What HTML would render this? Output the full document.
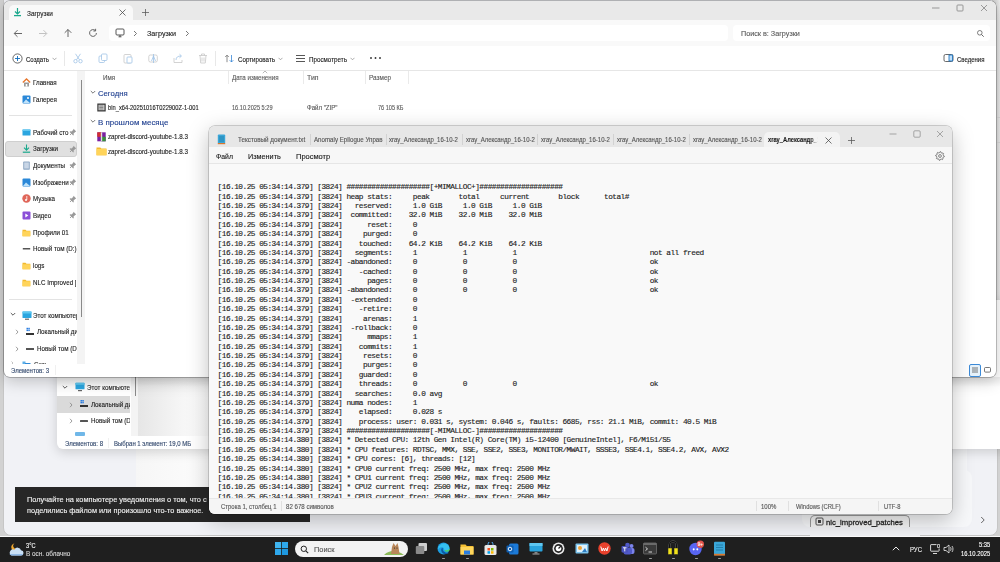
<!DOCTYPE html><html><head><meta charset="utf-8"><style>
html,body{margin:0;padding:0;width:1000px;height:562px;overflow:hidden;background:#ecedf0;}
body{position:relative;font-family:"Liberation Sans",sans-serif;}
.t{position:absolute;white-space:nowrap;-webkit-text-stroke:0.12px currentColor;}
.r{position:absolute;}
.mono{font-family:"Liberation Mono",monospace;}
</style></head><body>
<div class="r" style="left:0px;top:0px;width:1000px;height:537px;background:#d2d2d2"></div>
<div class="r" style="left:2.5px;top:-20px;width:995.5px;height:556px;background:#f1f2f6;border:1px solid #c6c6c6;border-radius:8px;box-sizing:border-box"></div>
<div class="r" style="left:940px;top:449px;width:27px;height:78px;background:#f6f7f9;border-radius:0 0 8px 0"></div>
<div class="r" style="left:136px;top:440px;width:90px;height:60px;background:linear-gradient(90deg,#f6f6f6,#fefefe)"></div>
<div class="r" style="left:992px;top:0px;width:8px;height:377px;background:linear-gradient(90deg,#c8c8c8,#dcdcdc 60%,#ececec);"></div>
<div class="r" style="left:993px;top:117px;width:7px;height:1px;background:#d8d8d8"></div>
<div class="r" style="left:993px;top:142px;width:7px;height:1px;background:#d8d8d8"></div>
<div class="r" style="left:57px;top:300px;width:960px;height:149px;background:#ffffff;border-radius:0 0 6px 6px;box-shadow:0 3px 12px rgba(0,0,0,.16)"></div>
<div class="r" style="left:57px;top:396px;width:73px;height:16.5px;background:#dadada"></div>
<div class="r" style="left:130.8px;top:377px;width:7.6px;height:59px;background:#f4f4f4"></div>
<div class="r" style="left:134.6px;top:377px;width:1.2px;height:19px;background:#8a8a8a"></div>
<div class="r" style="left:138.4px;top:377px;width:80px;height:59px;background:linear-gradient(90deg,#e6e6e6,#f6f6f6 55%,#fdfdfd)"></div>
<div class="r" style="left:57px;top:377px;width:960px;height:10px;background:linear-gradient(180deg,rgba(0,0,0,.07),rgba(0,0,0,0))"></div>
<svg class="r" style="left:62px;top:385px;" width="6" height="5" viewBox="0 0 6 5"><path d="M0.8 1L3 3.2 5.2 1" stroke="#333" stroke-width="0.8" fill="none"/></svg>
<svg class="r" style="left:75px;top:382px;" width="10" height="10" viewBox="0 0 10 10"><rect x="0.5" y="0.8" width="9" height="6.5" rx="0.6" fill="#2ba6e0"/><rect x="0.5" y="0.8" width="9" height="2" fill="#5fc8f0"/><rect x="3" y="8" width="4" height="1.2" fill="#666"/></svg>
<div class="r" style="left:86.5px;top:381.50px;width:43.5px;height:12px;overflow:hidden">
<div class="t " style="left:0px;top:2.81px;font-size:6.7px;line-height:8.38px;color:#1b1b1b;letter-spacing:0px;font-weight:normal;transform:scaleX(0.9300);transform-origin:0 50%;">Этот компьютер</div>
</div>
<svg class="r" style="left:69px;top:402px;" width="4" height="6" viewBox="0 0 4 6"><path d="M1 0.8L3 3 1 5.2" stroke="#777" stroke-width="0.7" fill="none"/></svg>
<svg class="r" style="left:79px;top:399px;" width="10" height="10" viewBox="0 0 10 10"><rect x="1" y="6" width="8" height="2" fill="#333"/><rect x="1.5" y="1" width="1.5" height="1.5" fill="#2a7de1"/><rect x="3.3" y="1" width="1.5" height="1.5" fill="#2a7de1"/><rect x="1.5" y="2.8" width="1.5" height="1.5" fill="#2a7de1"/><rect x="3.3" y="2.8" width="1.5" height="1.5" fill="#2a7de1"/></svg>
<div class="r" style="left:90.8px;top:398.50px;width:39.2px;height:12px;overflow:hidden">
<div class="t " style="left:0px;top:2.81px;font-size:6.7px;line-height:8.38px;color:#1b1b1b;letter-spacing:0px;font-weight:normal;transform:scaleX(0.9300);transform-origin:0 50%;">Локальный диск</div>
</div>
<svg class="r" style="left:69px;top:418px;" width="4" height="6" viewBox="0 0 4 6"><path d="M1 0.8L3 3 1 5.2" stroke="#777" stroke-width="0.7" fill="none"/></svg>
<div class="r" style="left:80px;top:420.3px;width:8px;height:1.6px;background:#555;border-radius:0.5px"></div>
<div class="r" style="left:90.8px;top:414.70px;width:39.2px;height:12px;overflow:hidden">
<div class="t " style="left:0px;top:2.81px;font-size:6.7px;line-height:8.38px;color:#1b1b1b;letter-spacing:0px;font-weight:normal;transform:scaleX(0.9300);transform-origin:0 50%;">Новый том (D:)</div>
</div>
<div class="r" style="left:75px;top:432px;width:10px;height:4px;background:#6fb7e8;border-radius:1px"></div>
<div class="t " style="left:65px;top:439.94px;font-size:6.5px;line-height:8.12px;color:#30466b;letter-spacing:0px;font-weight:normal;transform:scaleX(0.9329);transform-origin:0 50%;">Элементов: 8</div>
<div class="r" style="left:108px;top:438px;width:1px;height:10px;background:#f0f0f0"></div>
<div class="t " style="left:113.8px;top:439.94px;font-size:6.5px;line-height:8.12px;color:#30466b;letter-spacing:0px;font-weight:normal;transform:scaleX(0.9218);transform-origin:0 50%;">Выбран 1 элемент: 19,0 МБ</div>
<div class="r" style="left:4px;top:1px;width:992px;height:376px;background:#ffffff;border-radius:6px;box-shadow:0 0 0 0.7px rgba(0,0,0,.3),0 4px 16px rgba(0,0,0,.22)"></div>
<div class="r" style="left:4px;top:1px;width:992px;height:19px;background:#e9e9e9;border-radius:6px 6px 0 0"></div>
<div class="r" style="left:9px;top:5px;width:124px;height:16px;background:#f9f9f9;border-radius:5px 5px 0 0"></div>
<div class="r" style="left:4px;top:20px;width:992px;height:26px;background:#f9f9f9"></div>
<div class="r" style="left:4px;top:46px;width:992px;height:24px;background:#ffffff"></div>
<div class="r" style="left:4px;top:70px;width:992px;height:1px;background:#e6e6e6"></div>
<svg class="r" style="left:13px;top:7px;" width="9" height="10" viewBox="0 0 9 10"><path d="M4.5 1v6M2 4.5l2.5 2.5 2.5-2.5" stroke="#1aa88c" stroke-width="1.2" fill="none"/><path d="M1 8.6h7" stroke="#1aa88c" stroke-width="1.3"/></svg>
<div class="t " style="left:27px;top:9.81px;font-size:6.7px;line-height:8.38px;color:#1b1b1b;letter-spacing:0px;font-weight:normal;transform:scaleX(0.9643);transform-origin:0 50%;">Загрузки</div>
<svg class="r" style="left:118px;top:8px;" width="9" height="9" viewBox="0 0 9 9"><path d="M1.5 1.5l6 6M7.5 1.5l-6 6" stroke="#444" stroke-width="0.75"/></svg>
<svg class="r" style="left:141px;top:8px;" width="9" height="9" viewBox="0 0 9 9"><path d="M4.5 1v7M1 4.5h7" stroke="#555" stroke-width="0.75"/></svg>
<svg class="r" style="left:931px;top:3px;" width="10" height="10" viewBox="0 0 10 10"><path d="M1 5h7.5" stroke="#777" stroke-width="0.7"/></svg>
<svg class="r" style="left:955px;top:3px;" width="10" height="10" viewBox="0 0 10 10"><rect x="2" y="2" width="6" height="6" rx="0.8" stroke="#777" stroke-width="0.7" fill="none"/></svg>
<svg class="r" style="left:979px;top:3px;" width="10" height="10" viewBox="0 0 10 10"><path d="M2 2l6 6M8 2l-6 6" stroke="#777" stroke-width="0.7"/></svg>
<svg class="r" style="left:13px;top:29px;" width="10" height="9" viewBox="0 0 10 9"><path d="M9 4.5H1.5M4.5 1.2L1.2 4.5 4.5 7.8" stroke="#555" stroke-width="0.9" fill="none"/></svg>
<svg class="r" style="left:38px;top:29px;" width="10" height="9" viewBox="0 0 10 9"><path d="M1 4.5h7.5M5.5 1.2l3.3 3.3-3.3 3.3" stroke="#bbb" stroke-width="0.9" fill="none"/></svg>
<svg class="r" style="left:63px;top:28px;" width="10" height="10" viewBox="0 0 10 10"><path d="M5 9V1.5M1.7 4.8L5 1.5l3.3 3.3" stroke="#555" stroke-width="0.9" fill="none"/></svg>
<svg class="r" style="left:88px;top:28px;" width="10" height="10" viewBox="0 0 10 10"><path d="M8.4 5A3.4 3.4 0 1 1 7.2 2.4" stroke="#555" stroke-width="0.9" fill="none"/><path d="M7.6 0.8v2.2H5.4" stroke="#555" stroke-width="0.9" fill="none"/></svg>
<div class="r" style="left:109px;top:25px;width:619px;height:16px;background:#ffffff;border-radius:4px"></div>
<svg class="r" style="left:115px;top:28px;" width="10" height="10" viewBox="0 0 10 10"><rect x="1" y="1" width="8" height="6" rx="1" stroke="#444" stroke-width="0.9" fill="none"/><path d="M3.5 8.8h3M5 7v1.8" stroke="#444" stroke-width="0.9"/></svg>
<svg class="r" style="left:133px;top:30px;" width="5" height="7" viewBox="0 0 5 7"><path d="M1 1l2.5 2.5L1 6" stroke="#555" stroke-width="0.8" fill="none"/></svg>
<div class="t " style="left:147px;top:29.44px;font-size:7.3px;line-height:9.12px;color:#1b1b1b;letter-spacing:0px;font-weight:normal;transform:scaleX(0.9872);transform-origin:0 50%;">Загрузки</div>
<svg class="r" style="left:185px;top:30px;" width="5" height="7" viewBox="0 0 5 7"><path d="M1 1l2.5 2.5L1 6" stroke="#555" stroke-width="0.8" fill="none"/></svg>
<div class="r" style="left:733px;top:25px;width:257px;height:16px;background:#ffffff;border-radius:4px"></div>
<div class="t " style="left:741px;top:29.81px;font-size:6.7px;line-height:8.38px;color:#5a5a5a;letter-spacing:0px;font-weight:normal;transform:scaleX(1.0792);transform-origin:0 50%;">Поиск в: Загрузки</div>
<svg class="r" style="left:976px;top:29px;" width="9" height="9" viewBox="0 0 9 9"><circle cx="3.8" cy="3.8" r="2.3" stroke="#555" stroke-width="0.75" fill="none"/><path d="M5.5 5.5l2.2 2.2" stroke="#555" stroke-width="0.9"/></svg>
<svg class="r" style="left:12px;top:53px;" width="11" height="11" viewBox="0 0 11 11"><circle cx="5.5" cy="5.5" r="4.6" stroke="#444" stroke-width="0.8" fill="none"/><path d="M5.5 3v5M3 5.5h5" stroke="#0f6cbd" stroke-width="0.9"/></svg>
<div class="t " style="left:26px;top:56.11px;font-size:6.7px;line-height:8.38px;color:#1b1b1b;letter-spacing:0px;font-weight:normal;transform:scaleX(0.9034);transform-origin:0 50%;">Создать</div>
<svg class="r" style="left:52px;top:57px;" width="5" height="4" viewBox="0 0 5 4"><path d="M0.5 0.8L2.5 2.8 4.5 0.8" stroke="#888" stroke-width="0.7" fill="none"/></svg>
<div class="r" style="left:64px;top:51px;width:1px;height:15px;background:#e8e8e8"></div>
<svg class="r" style="left:73px;top:53px;" width="10" height="11" viewBox="0 0 10 11"><circle cx="2.5" cy="8.2" r="1.7" stroke="#9fc3e6" stroke-width="0.8" fill="none"/><circle cx="7.5" cy="8.2" r="1.7" stroke="#9fc3e6" stroke-width="0.8" fill="none"/><path d="M3.5 6.8L7.5 0.8M6.5 6.8L2.5 0.8" stroke="#9fc3e6" stroke-width="0.8"/></svg>
<svg class="r" style="left:98px;top:53px;" width="10" height="11" viewBox="0 0 10 11"><rect x="1" y="3" width="5.5" height="6.5" rx="1" stroke="#9fc3e6" stroke-width="0.8" fill="none"/><rect x="3.5" y="1" width="5.5" height="6.5" rx="1" stroke="#9fc3e6" stroke-width="0.8" fill="#fff"/></svg>
<svg class="r" style="left:123px;top:53px;" width="10" height="11" viewBox="0 0 10 11"><rect x="1" y="1.5" width="7" height="8.5" rx="1" stroke="#c8c8c8" stroke-width="0.8" fill="none"/><rect x="4" y="4" width="5" height="6" rx="0.8" stroke="#9fc3e6" stroke-width="0.8" fill="#fff"/></svg>
<svg class="r" style="left:148px;top:53px;" width="11" height="11" viewBox="0 0 11 11"><rect x="0.8" y="2" width="8.5" height="7" rx="1.5" stroke="#c8c8c8" stroke-width="0.8" fill="none"/><path d="M5.5 1v9M3.5 8l2-5 2 5" stroke="#9fc3e6" stroke-width="0.8" fill="none"/></svg>
<svg class="r" style="left:173px;top:53px;" width="11" height="11" viewBox="0 0 11 11"><path d="M1 5v4.5h8V7" stroke="#c8c8c8" stroke-width="0.8" fill="none"/><path d="M3 7c0-3 2-4 5-4M6.5 1.2L8.5 3 6.5 4.8" stroke="#9fc3e6" stroke-width="0.8" fill="none"/></svg>
<svg class="r" style="left:198px;top:53px;" width="10" height="11" viewBox="0 0 10 11"><path d="M1 2.5h8M3.5 2.5V1h3v1.5M2 2.5l0.7 7.5h4.6l0.7-7.5M4 4.5v4M6 4.5v4" stroke="#c8c8c8" stroke-width="0.8" fill="none"/></svg>
<div class="r" style="left:215px;top:51px;width:1px;height:15px;background:#e8e8e8"></div>
<svg class="r" style="left:224px;top:54px;" width="11" height="9" viewBox="0 0 11 9"><path d="M3 8.2V1.2M1.2 3L3 1.2 4.8 3" stroke="#666" stroke-width="0.75" fill="none"/><path d="M7.5 1v7M5.7 6.2L7.5 8 9.3 6.2" stroke="#2b7fd4" stroke-width="0.75" fill="none"/></svg>
<div class="t " style="left:238px;top:56.11px;font-size:6.7px;line-height:8.38px;color:#1b1b1b;letter-spacing:0px;font-weight:normal;transform:scaleX(0.9244);transform-origin:0 50%;">Сортировать</div>
<svg class="r" style="left:278px;top:57px;" width="5" height="4" viewBox="0 0 5 4"><path d="M0.5 0.8L2.5 2.8 4.5 0.8" stroke="#888" stroke-width="0.7" fill="none"/></svg>
<svg class="r" style="left:295px;top:54px;" width="11" height="9" viewBox="0 0 11 9"><path d="M1 1.5h9M1 4.5h9M1 7.5h9" stroke="#444" stroke-width="0.9"/></svg>
<div class="t " style="left:309px;top:56.11px;font-size:6.7px;line-height:8.38px;color:#1b1b1b;letter-spacing:0px;font-weight:normal;transform:scaleX(0.9346);transform-origin:0 50%;">Просмотреть</div>
<svg class="r" style="left:350px;top:57px;" width="5" height="4" viewBox="0 0 5 4"><path d="M0.5 0.8L2.5 2.8 4.5 0.8" stroke="#888" stroke-width="0.7" fill="none"/></svg>
<svg class="r" style="left:369px;top:56px;" width="13" height="4" viewBox="0 0 13 4"><circle cx="2" cy="2" r="0.95" fill="#333"/><circle cx="6.5" cy="2" r="0.95" fill="#333"/><circle cx="11" cy="2" r="0.95" fill="#333"/></svg>
<svg class="r" style="left:943px;top:53px;" width="11" height="10" viewBox="0 0 11 10"><rect x="1" y="1.5" width="9" height="7" rx="1.5" stroke="#444" stroke-width="0.8" fill="none"/><rect x="6" y="2" width="3.5" height="6" fill="#bfe0fb" stroke="#0f6cbd" stroke-width="0.8"/></svg>
<div class="t " style="left:957px;top:56.11px;font-size:6.7px;line-height:8.38px;color:#1b1b1b;letter-spacing:0px;font-weight:normal;transform:scaleX(0.8985);transform-origin:0 50%;">Сведения</div>
<div class="r" style="left:77px;top:71px;width:8px;height:293px;background:#f4f4f4"></div>
<div class="r" style="left:80.6px;top:80px;width:1.2px;height:237px;background:#8a8a8a"></div>
<div class="r" style="left:5px;top:140.5px;width:71.5px;height:16px;background:#e0e0e0;border:1px solid #cfcfcf;border-radius:3px;box-sizing:border-box"></div>
<div class="r" style="left:9px;top:115px;width:63px;height:1px;background:#e3e3e3"></div>
<div class="r" style="left:9px;top:299px;width:63px;height:1px;background:#e3e3e3"></div>
<div class="r" style="left:33px;top:76.00px;width:60px;height:12px;overflow:hidden">
<div class="t " style="left:0px;top:2.81px;font-size:6.7px;line-height:8.38px;color:#1b1b1b;letter-spacing:0px;font-weight:normal;transform:scaleX(0.9300);transform-origin:0 50%;">Главная</div>
</div>
<div class="r" style="left:33px;top:93.00px;width:60px;height:12px;overflow:hidden">
<div class="t " style="left:0px;top:2.81px;font-size:6.7px;line-height:8.38px;color:#1b1b1b;letter-spacing:0px;font-weight:normal;transform:scaleX(0.9300);transform-origin:0 50%;">Галерея</div>
</div>
<div class="r" style="left:33px;top:126.00px;width:60px;height:12px;overflow:hidden">
<div class="t " style="left:0px;top:2.81px;font-size:6.7px;line-height:8.38px;color:#1b1b1b;letter-spacing:0px;font-weight:normal;transform:scaleX(0.9300);transform-origin:0 50%;">Рабочий сто</div>
</div>
<div class="r" style="left:33px;top:142.50px;width:60px;height:12px;overflow:hidden">
<div class="t " style="left:0px;top:2.81px;font-size:6.7px;line-height:8.38px;color:#1b1b1b;letter-spacing:0px;font-weight:normal;transform:scaleX(0.9300);transform-origin:0 50%;">Загрузки</div>
</div>
<div class="r" style="left:33px;top:159.00px;width:60px;height:12px;overflow:hidden">
<div class="t " style="left:0px;top:2.81px;font-size:6.7px;line-height:8.38px;color:#1b1b1b;letter-spacing:0px;font-weight:normal;transform:scaleX(0.9300);transform-origin:0 50%;">Документы</div>
</div>
<div class="r" style="left:33px;top:176.00px;width:35.5px;height:12px;overflow:hidden">
<div class="t " style="left:0px;top:2.81px;font-size:6.7px;line-height:8.38px;color:#1b1b1b;letter-spacing:0px;font-weight:normal;transform:scaleX(0.9300);transform-origin:0 50%;">Изображени</div>
</div>
<div class="r" style="left:33px;top:192.50px;width:60px;height:12px;overflow:hidden">
<div class="t " style="left:0px;top:2.81px;font-size:6.7px;line-height:8.38px;color:#1b1b1b;letter-spacing:0px;font-weight:normal;transform:scaleX(0.9300);transform-origin:0 50%;">Музыка</div>
</div>
<div class="r" style="left:33px;top:209.00px;width:60px;height:12px;overflow:hidden">
<div class="t " style="left:0px;top:2.81px;font-size:6.7px;line-height:8.38px;color:#1b1b1b;letter-spacing:0px;font-weight:normal;transform:scaleX(0.9300);transform-origin:0 50%;">Видео</div>
</div>
<div class="r" style="left:33px;top:226.00px;width:60px;height:12px;overflow:hidden">
<div class="t " style="left:0px;top:2.81px;font-size:6.7px;line-height:8.38px;color:#1b1b1b;letter-spacing:0px;font-weight:normal;transform:scaleX(0.9300);transform-origin:0 50%;">Профили 01</div>
</div>
<div class="r" style="left:33px;top:242.50px;width:44px;height:12px;overflow:hidden">
<div class="t " style="left:0px;top:2.81px;font-size:6.7px;line-height:8.38px;color:#1b1b1b;letter-spacing:0px;font-weight:normal;transform:scaleX(0.9300);transform-origin:0 50%;">Новый том (D:)</div>
</div>
<div class="r" style="left:33px;top:259.50px;width:60px;height:12px;overflow:hidden">
<div class="t " style="left:0px;top:2.81px;font-size:6.7px;line-height:8.38px;color:#1b1b1b;letter-spacing:0px;font-weight:normal;transform:scaleX(0.9300);transform-origin:0 50%;">logs</div>
</div>
<div class="r" style="left:33px;top:276.00px;width:43px;height:12px;overflow:hidden">
<div class="t " style="left:0px;top:2.81px;font-size:6.7px;line-height:8.38px;color:#1b1b1b;letter-spacing:0px;font-weight:normal;transform:scaleX(0.9300);transform-origin:0 50%;">NLC Improved [</div>
</div>
<svg class="r" style="left:22px;top:77.5px;" width="9" height="9" viewBox="0 0 9 9"><path d="M0.8 4.5L4.5 1l3.7 3.5" stroke="#e8772e" stroke-width="1.3" fill="none"/><rect x="2" y="4.5" width="5" height="4" fill="#9a9a9a"/><rect x="3.7" y="6" width="1.6" height="2.5" fill="#fff"/></svg>
<svg class="r" style="left:22px;top:94.5px;" width="9" height="9" viewBox="0 0 9 9"><rect x="0.5" y="0.5" width="8" height="8" rx="1" fill="#2b88d8"/><circle cx="6" cy="3" r="1" fill="#fff"/><path d="M1 8l3-3.5 4 3.5z" fill="#bfe3fb"/></svg>
<svg class="r" style="left:22px;top:127.5px;" width="9" height="9" viewBox="0 0 9 9"><rect x="0.5" y="1.5" width="8" height="6" rx="0.6" fill="#2ba6e0"/><rect x="0.5" y="1.5" width="8" height="1.5" fill="#66c9f2"/></svg>
<svg class="r" style="left:22px;top:144.0px;" width="9" height="9" viewBox="0 0 9 9"><path d="M4.5 0.5v5.5M2 3.6l2.5 2.5 2.5-2.5" stroke="#1aa88c" stroke-width="1.1" fill="none"/><path d="M0.8 8.2h7.4" stroke="#1aa88c" stroke-width="1.2"/></svg>
<svg class="r" style="left:22px;top:160.5px;" width="9" height="9" viewBox="0 0 9 9"><rect x="1.2" y="0.5" width="6.6" height="8.2" rx="0.8" fill="#8fa8c4"/><rect x="2.2" y="1.5" width="4.6" height="6" fill="#c9d6e6"/></svg>
<svg class="r" style="left:22px;top:177.5px;" width="9" height="9" viewBox="0 0 9 9"><rect x="0.5" y="0.5" width="8" height="8" rx="1" fill="#2b88d8"/><path d="M1 8l3-3.5 4 3.5z" fill="#bfe3fb"/></svg>
<svg class="r" style="left:22px;top:194.0px;" width="9" height="9" viewBox="0 0 9 9"><circle cx="4.5" cy="4.5" r="4.2" fill="#e0675a"/><path d="M4.8 2v4" stroke="#fff" stroke-width="0.8"/><circle cx="4" cy="6" r="1" fill="#fff"/></svg>
<svg class="r" style="left:22px;top:210.5px;" width="9" height="9" viewBox="0 0 9 9"><rect x="0.5" y="0.5" width="8" height="8" rx="1" fill="#8b4fd8"/><path d="M3.3 2.5v4l3-2z" fill="#fff"/></svg>
<svg class="r" style="left:22px;top:227.5px;" width="9" height="9" viewBox="0 0 9 9"><path d="M0.5 1.8h3l1 1h3.8v5.5H0.5z" fill="#f2b92e"/><rect x="0.5" y="3.3" width="7.8" height="5" rx="0.4" fill="#ffd45a"/></svg>
<svg class="r" style="left:22px;top:244.0px;" width="9" height="9" viewBox="0 0 9 9"><rect x="0.8" y="4" width="7.4" height="1.5" fill="#555"/></svg>
<svg class="r" style="left:22px;top:261.0px;" width="9" height="9" viewBox="0 0 9 9"><path d="M0.5 1.8h3l1 1h3.8v5.5H0.5z" fill="#f2b92e"/><rect x="0.5" y="3.3" width="7.8" height="5" rx="0.4" fill="#ffd45a"/></svg>
<svg class="r" style="left:22px;top:277.5px;" width="9" height="9" viewBox="0 0 9 9"><path d="M0.5 1.8h3l1 1h3.8v5.5H0.5z" fill="#f2b92e"/><rect x="0.5" y="3.3" width="7.8" height="5" rx="0.4" fill="#ffd45a"/></svg>
<svg class="r" style="left:22px;top:311px;" width="10" height="9" viewBox="0 0 10 9"><rect x="0.5" y="0.5" width="9" height="6.5" rx="0.6" fill="#2ba6e0"/><rect x="0.5" y="0.5" width="9" height="2" fill="#5fc8f0"/><rect x="3" y="7.6" width="4" height="1.2" fill="#666"/></svg>
<svg class="r" style="left:25px;top:327px;" width="10" height="9" viewBox="0 0 10 9"><rect x="1" y="6" width="8" height="2" fill="#333"/><rect x="1.5" y="0.8" width="1.5" height="1.5" fill="#2a7de1"/><rect x="3.3" y="0.8" width="1.5" height="1.5" fill="#2a7de1"/><rect x="1.5" y="2.6" width="1.5" height="1.5" fill="#2a7de1"/><rect x="3.3" y="2.6" width="1.5" height="1.5" fill="#2a7de1"/></svg>
<div class="r" style="left:26px;top:348.3px;width:8px;height:1.6px;background:#555"></div>
<svg class="r" style="left:97px;top:103px;" width="9" height="9" viewBox="0 0 9 9"><rect x="0.3" y="0.5" width="8.4" height="8" fill="#3a3a3a"/><rect x="1.5" y="1.8" width="6" height="5.4" fill="#cfcfcf"/><path d="M2.3 3h4M2.3 4.5h4M2.3 6h4" stroke="#555" stroke-width="0.6"/></svg>
<svg class="r" style="left:97px;top:132px;" width="9" height="10" viewBox="0 0 9 10"><rect x="0.3" y="0.3" width="8.4" height="9" fill="#7a1fa2"/><rect x="0.3" y="0.3" width="4.2" height="4.5" fill="#d32f2f"/><rect x="4.5" y="4.8" width="4.2" height="4.5" fill="#388e3c"/><rect x="3.8" y="0.3" width="1.4" height="9" fill="#ddd"/></svg>
<svg class="r" style="left:96px;top:146px;" width="11" height="10" viewBox="0 0 11 10"><path d="M0.5 1.5h3.8l1 1h5.2v6.8H0.5z" fill="#f2b92e"/><rect x="0.5" y="3" width="10" height="6.3" fill="#ffd45a"/></svg>
<svg class="r" style="left:68.5px;top:128px;" width="8" height="8" viewBox="0 0 8 8"><path d="M1 7l2.3-2.3" stroke="#8a8a8a" stroke-width="0.8"/><path d="M4.6 0.8l2.6 2.6-1 .6-1.6 1.6.2 1.3-.6.6-3.6-3.6.6-.6 1.3.2 1.6-1.6z" fill="#9a9a9a"/></svg>
<svg class="r" style="left:68.5px;top:144.5px;" width="8" height="8" viewBox="0 0 8 8"><path d="M1 7l2.3-2.3" stroke="#8a8a8a" stroke-width="0.8"/><path d="M4.6 0.8l2.6 2.6-1 .6-1.6 1.6.2 1.3-.6.6-3.6-3.6.6-.6 1.3.2 1.6-1.6z" fill="#9a9a9a"/></svg>
<svg class="r" style="left:68.5px;top:161px;" width="8" height="8" viewBox="0 0 8 8"><path d="M1 7l2.3-2.3" stroke="#8a8a8a" stroke-width="0.8"/><path d="M4.6 0.8l2.6 2.6-1 .6-1.6 1.6.2 1.3-.6.6-3.6-3.6.6-.6 1.3.2 1.6-1.6z" fill="#9a9a9a"/></svg>
<svg class="r" style="left:68.5px;top:178px;" width="8" height="8" viewBox="0 0 8 8"><path d="M1 7l2.3-2.3" stroke="#8a8a8a" stroke-width="0.8"/><path d="M4.6 0.8l2.6 2.6-1 .6-1.6 1.6.2 1.3-.6.6-3.6-3.6.6-.6 1.3.2 1.6-1.6z" fill="#9a9a9a"/></svg>
<svg class="r" style="left:68.5px;top:194.5px;" width="8" height="8" viewBox="0 0 8 8"><path d="M1 7l2.3-2.3" stroke="#8a8a8a" stroke-width="0.8"/><path d="M4.6 0.8l2.6 2.6-1 .6-1.6 1.6.2 1.3-.6.6-3.6-3.6.6-.6 1.3.2 1.6-1.6z" fill="#9a9a9a"/></svg>
<svg class="r" style="left:68.5px;top:211px;" width="8" height="8" viewBox="0 0 8 8"><path d="M1 7l2.3-2.3" stroke="#8a8a8a" stroke-width="0.8"/><path d="M4.6 0.8l2.6 2.6-1 .6-1.6 1.6.2 1.3-.6.6-3.6-3.6.6-.6 1.3.2 1.6-1.6z" fill="#9a9a9a"/></svg>
<div class="r" style="left:33px;top:309.00px;width:43.5px;height:12px;overflow:hidden">
<div class="t " style="left:0px;top:2.81px;font-size:6.7px;line-height:8.38px;color:#1b1b1b;letter-spacing:0px;font-weight:normal;transform:scaleX(0.9300);transform-origin:0 50%;">Этот компьютер</div>
</div>
<div class="r" style="left:37px;top:325.50px;width:39.5px;height:12px;overflow:hidden">
<div class="t " style="left:0px;top:2.81px;font-size:6.7px;line-height:8.38px;color:#1b1b1b;letter-spacing:0px;font-weight:normal;transform:scaleX(0.9300);transform-origin:0 50%;">Локальный диск</div>
</div>
<div class="r" style="left:37px;top:342.50px;width:39.5px;height:12px;overflow:hidden">
<div class="t " style="left:0px;top:2.81px;font-size:6.7px;line-height:8.38px;color:#1b1b1b;letter-spacing:0px;font-weight:normal;transform:scaleX(0.9300);transform-origin:0 50%;">Новый том (D:)</div>
</div>
<svg class="r" style="left:10px;top:312px;" width="6" height="5" viewBox="0 0 6 5"><path d="M0.8 1L3 3.2 5.2 1" stroke="#333" stroke-width="0.8" fill="none"/></svg>
<svg class="r" style="left:15px;top:329px;" width="4" height="6" viewBox="0 0 4 6"><path d="M1 0.8L3 3 1 5.2" stroke="#777" stroke-width="0.7" fill="none"/></svg>
<svg class="r" style="left:15px;top:346px;" width="4" height="6" viewBox="0 0 4 6"><path d="M1 0.8L3 3 1 5.2" stroke="#777" stroke-width="0.7" fill="none"/></svg>
<div class="r" style="left:5px;top:358px;width:72px;height:6px;overflow:hidden">
<svg class="r" style="left:6px;top:2.5px;" width="4" height="4" viewBox="0 0 4 4"><path d="M0.5 0.5L2 2 0.5 3.5" stroke="#999" stroke-width="0.6" fill="none"/></svg>
<svg class="r" style="left:17px;top:1.5px;" width="9" height="6" viewBox="0 0 9 6"><rect x="0.5" y="1.5" width="3" height="3" fill="#5aaee8"/><rect x="3" y="3" width="5.5" height="2.5" fill="#2f8ad8"/></svg>
<div class="t " style="left:29px;top:2.81px;font-size:6.7px;line-height:8.38px;color:#333;letter-spacing:0px;font-weight:normal;transform:scaleX(0.9395);transform-origin:0 50%;">Сеть</div>
</div>
<div class="t " style="left:103px;top:73.94px;font-size:6.5px;line-height:8.12px;color:#5a5a5a;letter-spacing:0px;font-weight:normal;transform:scaleX(0.9636);transform-origin:0 50%;">Имя</div>
<svg class="r" style="left:262px;top:70px;" width="6" height="4" viewBox="0 0 6 4"><path d="M0.8 3.2L3 1l2.2 2.2" stroke="#888" stroke-width="0.6" fill="none"/></svg>
<div class="t " style="left:232px;top:73.94px;font-size:6.5px;line-height:8.12px;color:#5a5a5a;letter-spacing:0px;font-weight:normal;transform:scaleX(0.9522);transform-origin:0 50%;">Дата изменения</div>
<div class="t " style="left:307px;top:73.94px;font-size:6.5px;line-height:8.12px;color:#5a5a5a;letter-spacing:0px;font-weight:normal;transform:scaleX(1.0613);transform-origin:0 50%;">Тип</div>
<div class="t " style="left:369px;top:73.94px;font-size:6.5px;line-height:8.12px;color:#5a5a5a;letter-spacing:0px;font-weight:normal;transform:scaleX(0.9848);transform-origin:0 50%;">Размер</div>
<div class="r" style="left:228px;top:71px;width:1px;height:13px;background:#eaeaea"></div>
<div class="r" style="left:303px;top:71px;width:1px;height:13px;background:#eaeaea"></div>
<div class="r" style="left:365px;top:71px;width:1px;height:13px;background:#eaeaea"></div>
<div class="r" style="left:408px;top:71px;width:1px;height:13px;background:#eaeaea"></div>
<svg class="r" style="left:90px;top:90px;" width="6" height="5" viewBox="0 0 6 5"><path d="M0.8 1L3 3.2 5.2 1" stroke="#555" stroke-width="0.8" fill="none"/></svg>
<div class="t " style="left:98px;top:89.25px;font-size:7.6px;line-height:9.5px;color:#1e3e8f;letter-spacing:0px;font-weight:normal;transform:scaleX(1.0163);transform-origin:0 50%;">Сегодня</div>
<svg class="r" style="left:90px;top:119px;" width="6" height="5" viewBox="0 0 6 5"><path d="M0.8 1L3 3.2 5.2 1" stroke="#555" stroke-width="0.8" fill="none"/></svg>
<div class="t " style="left:98px;top:118.25px;font-size:7.6px;line-height:9.5px;color:#1e3e8f;letter-spacing:0px;font-weight:normal;transform:scaleX(1.0400);transform-origin:0 50%;">В прошлом месяце</div>
<div class="t " style="left:108px;top:104.31px;font-size:6.7px;line-height:8.38px;color:#1b1b1b;letter-spacing:0px;font-weight:normal;transform:scaleX(0.8614);transform-origin:0 50%;">bin_x64-20251016T022900Z-1-001</div>
<div class="t " style="left:232px;top:104.44px;font-size:6.5px;line-height:8.12px;color:#5a5a5a;letter-spacing:0px;font-weight:normal;transform:scaleX(0.8620);transform-origin:0 50%;">16.10.2025 5:29</div>
<div class="t " style="left:307px;top:104.44px;font-size:6.5px;line-height:8.12px;color:#5a5a5a;letter-spacing:0px;font-weight:normal;transform:scaleX(0.9381);transform-origin:0 50%;">Файл &quot;ZIP&quot;</div>
<div class="t " style="left:378px;top:104.44px;font-size:6.5px;line-height:8.12px;color:#5a5a5a;letter-spacing:0px;font-weight:normal;transform:scaleX(0.8575);transform-origin:0 50%;">76 105 КБ</div>
<div class="t " style="left:108px;top:133.31px;font-size:6.7px;line-height:8.38px;color:#1b1b1b;letter-spacing:0px;font-weight:normal;transform:scaleX(0.9340);transform-origin:0 50%;">zapret-discord-youtube-1.8.3</div>
<div class="t " style="left:108px;top:147.81px;font-size:6.7px;line-height:8.38px;color:#1b1b1b;letter-spacing:0px;font-weight:normal;transform:scaleX(0.9340);transform-origin:0 50%;">zapret-discord-youtube-1.8.3</div>
<div class="t " style="left:11px;top:366.94px;font-size:6.5px;line-height:8.12px;color:#30466b;letter-spacing:0px;font-weight:normal;transform:scaleX(0.9329);transform-origin:0 50%;">Элементов: 3</div>
<div class="r" style="left:55px;top:365px;width:1px;height:10px;background:#f0f0f0"></div>
<div class="r" style="left:969px;top:364px;width:12px;height:12.5px;background:#e6f2fb;border:1px solid #3b8ad8;border-radius:2px;box-sizing:border-box"></div>
<svg class="r" style="left:971px;top:366px;" width="8" height="8" viewBox="0 0 8 8"><path d="M1 2h6M1 4h6M1 6h6" stroke="#666" stroke-width="0.9"/></svg>
<svg class="r" style="left:984px;top:367px;" width="7" height="6" viewBox="0 0 7 6"><rect x="0.5" y="0.5" width="6" height="4.6" rx="1" stroke="#555" stroke-width="0.8" fill="none"/></svg>
<div class="r" style="left:802px;top:470px;width:170px;height:57px;background:#f7f8fa;border-radius:8px"></div>
<div class="r" style="left:810px;top:515px;width:100px;height:14px;background:#f5f5f5;border:1px solid #9a9a9a;border-bottom:none;border-radius:5px 5px 0 0;box-sizing:border-box"></div>
<div class="t " style="left:826px;top:518.25px;font-size:7.6px;line-height:9.5px;color:#2a2a2a;letter-spacing:0px;font-weight:normal;transform:scaleX(1.0126);transform-origin:0 50%;-webkit-text-stroke:0.3px #2a2a2a">nlc_improved_patches</div>
<svg class="r" style="left:815px;top:517px;" width="9" height="9" viewBox="0 0 9 9"><rect x="1" y="1" width="7" height="7" rx="1" stroke="#444" stroke-width="0.9" fill="none"/><rect x="3" y="3" width="3" height="3" fill="#444"/></svg>
<div class="r" style="left:810px;top:527px;width:110px;height:10px;background:#f1f2f5"></div>
<svg class="r" style="left:980px;top:516px;" width="6" height="8" viewBox="0 0 6 8"><path d="M1.2 1l3 3-3 3" stroke="#555" stroke-width="0.9" fill="none"/></svg>
<div class="r" style="left:14.7px;top:487px;width:295.6px;height:35px;background:#272727"></div>
<div class="t " style="left:27px;top:495.30px;font-size:7.2px;line-height:9.0px;color:#f0f0f0;letter-spacing:0px;font-weight:normal;transform:scaleX(1.0269);transform-origin:0 50%;">Получайте на компьютере уведомления о том, что с в</div>
<div class="t " style="left:27px;top:505.60px;font-size:7.2px;line-height:9.0px;color:#f0f0f0;letter-spacing:0px;font-weight:normal;transform:scaleX(1.0197);transform-origin:0 50%;">поделились файлом или произошло что-то важное.</div>
<div class="r" style="left:208.5px;top:126px;width:743.5px;height:388px;background:#f9f9f9;border-radius:6px;box-shadow:0 6px 22px rgba(0,0,0,.26), 0 0 0 0.7px rgba(0,0,0,.22);overflow:hidden"></div>
<div class="r" style="left:208.5px;top:126px;width:743.5px;height:21px;background:#e7e7e7;border-radius:6px 6px 0 0"></div>
<div class="r" style="left:208.5px;top:147px;width:743.5px;height:17px;background:#f7f7f7;border-bottom:1px solid #e6e6e6;box-sizing:border-box"></div>
<div class="r" style="left:208.5px;top:498px;width:743.5px;height:16px;background:#f5f5f5;border-radius:0 0 6px 6px;border-top:1px solid #e8e8e8;box-sizing:border-box"></div>
<svg class="r" style="left:217px;top:134px;" width="9" height="11" viewBox="0 0 9 11"><rect x="0.8" y="0.5" width="7.4" height="9" rx="1" fill="#3aa6d8"/><path d="M2 3h5M2 5h5M2 7h5" stroke="#1a6f99" stroke-width="0.6"/><rect x="0.8" y="9" width="7.4" height="1.2" fill="#d9782e"/></svg>
<div class="t " style="left:238px;top:136.38px;font-size:6.6px;line-height:8.25px;color:#555;letter-spacing:0px;font-weight:normal;transform:scaleX(0.9514);transform-origin:0 50%;">Текстовый документ.txt</div>
<div class="t " style="left:314px;top:136.38px;font-size:6.6px;line-height:8.25px;color:#555;letter-spacing:0px;font-weight:normal;transform:scaleX(0.9353);transform-origin:0 50%;">Anomaly Epilogue Управ</div>
<div class="t " style="left:389.4px;top:136.38px;font-size:6.6px;line-height:8.25px;color:#555;letter-spacing:0px;font-weight:normal;transform:scaleX(0.9117);transform-origin:0 50%;">xray_Александр_16-10-2</div>
<div class="t " style="left:465.8px;top:136.38px;font-size:6.6px;line-height:8.25px;color:#555;letter-spacing:0px;font-weight:normal;transform:scaleX(0.9117);transform-origin:0 50%;">xray_Александр_16-10-2</div>
<div class="t " style="left:541.4px;top:136.38px;font-size:6.6px;line-height:8.25px;color:#555;letter-spacing:0px;font-weight:normal;transform:scaleX(0.9117);transform-origin:0 50%;">xray_Александр_16-10-2</div>
<div class="t " style="left:617px;top:136.38px;font-size:6.6px;line-height:8.25px;color:#555;letter-spacing:0px;font-weight:normal;transform:scaleX(0.9117);transform-origin:0 50%;">xray_Александр_16-10-2</div>
<div class="t " style="left:692.7px;top:136.38px;font-size:6.6px;line-height:8.25px;color:#555;letter-spacing:0px;font-weight:normal;transform:scaleX(0.9117);transform-origin:0 50%;">xray_Александр_16-10-2</div>
<div class="r" style="left:310.2px;top:134px;width:1px;height:11px;background:#d2d2d2"></div>
<div class="r" style="left:385.8px;top:134px;width:1px;height:11px;background:#d2d2d2"></div>
<div class="r" style="left:461.5px;top:134px;width:1px;height:11px;background:#d2d2d2"></div>
<div class="r" style="left:537px;top:134px;width:1px;height:11px;background:#d2d2d2"></div>
<div class="r" style="left:612.5px;top:134px;width:1px;height:11px;background:#d2d2d2"></div>
<div class="r" style="left:689px;top:134px;width:1px;height:11px;background:#d2d2d2"></div>
<div class="r" style="left:764px;top:132px;width:75.5px;height:15px;background:#f3f3f3;border-radius:5px 5px 0 0"></div>
<div class="r" style="left:768px;top:132px;width:50px;height:15px;overflow:hidden;-webkit-mask-image:linear-gradient(90deg,#000 85%,transparent)">
<div class="t " style="left:0.3px;top:4.38px;font-size:6.6px;line-height:8.25px;color:#1b1b1b;letter-spacing:0px;font-weight:bold;transform:scaleX(0.8703);transform-origin:0 50%;">xray_Александр_16-10-2</div>
</div>
<svg class="r" style="left:824px;top:135.5px;" width="9" height="9" viewBox="0 0 9 9"><path d="M1.5 1.5l6 6M7.5 1.5l-6 6" stroke="#444" stroke-width="0.75"/></svg>
<svg class="r" style="left:847px;top:135.5px;" width="9" height="9" viewBox="0 0 9 9"><path d="M4.5 1v7M1 4.5h7" stroke="#555" stroke-width="0.75"/></svg>
<svg class="r" style="left:888px;top:129px;" width="10" height="10" viewBox="0 0 10 10"><path d="M1.5 5h7" stroke="#888" stroke-width="0.7"/></svg>
<svg class="r" style="left:912px;top:129px;" width="10" height="10" viewBox="0 0 10 10"><rect x="1.8" y="1.8" width="6.4" height="6.4" rx="1" stroke="#888" stroke-width="0.7" fill="none"/></svg>
<svg class="r" style="left:935px;top:129px;" width="10" height="10" viewBox="0 0 10 10"><path d="M2 2l6 6M8 2l-6 6" stroke="#888" stroke-width="0.7"/></svg>
<div class="t " style="left:216px;top:152.44px;font-size:7.3px;line-height:9.12px;color:#1b1b1b;letter-spacing:0px;font-weight:normal;transform:scaleX(0.9473);transform-origin:0 50%;">Файл</div>
<div class="t " style="left:248px;top:152.44px;font-size:7.3px;line-height:9.12px;color:#1b1b1b;letter-spacing:0px;font-weight:normal;transform:scaleX(0.9962);transform-origin:0 50%;">Изменить</div>
<div class="t " style="left:296px;top:152.44px;font-size:7.3px;line-height:9.12px;color:#1b1b1b;letter-spacing:0px;font-weight:normal;transform:scaleX(1.0259);transform-origin:0 50%;">Просмотр</div>
<svg class="r" style="left:935px;top:151px;" width="10" height="10" viewBox="0 0 10 10"><path d="M9.30 5.00 L9.22 5.84 L8.05 6.26 L7.74 6.83 L8.04 8.04 L7.39 8.58 L6.26 8.05 L5.64 8.24 L5.00 9.30 L4.16 9.22 L3.74 8.05 L3.17 7.74 L1.96 8.04 L1.42 7.39 L1.95 6.26 L1.76 5.64 L0.70 5.00 L0.78 4.16 L1.95 3.74 L2.26 3.17 L1.96 1.96 L2.61 1.42 L3.74 1.95 L4.36 1.76 L5.00 0.70 L5.84 0.78 L6.26 1.95 L6.83 2.26 L8.04 1.96 L8.58 2.61 L8.05 3.74 L8.24 4.36Z" stroke="#555" stroke-width="0.7" fill="none" stroke-linejoin="round"/><circle cx="5" cy="5" r="1.4" stroke="#555" stroke-width="0.7" fill="none"/></svg>
<div class="t " style="left:220.7px;top:503.38px;font-size:6.6px;line-height:8.25px;color:#555;letter-spacing:0px;font-weight:normal;transform:scaleX(0.9056);transform-origin:0 50%;">Строка 1, столбец 1</div>
<div class="r" style="left:281px;top:501px;width:1px;height:10px;background:#e0e0e0"></div>
<div class="t " style="left:286px;top:503.38px;font-size:6.6px;line-height:8.25px;color:#555;letter-spacing:0px;font-weight:normal;transform:scaleX(0.9263);transform-origin:0 50%;">82 678 символов</div>
<div class="r" style="left:755.5px;top:501px;width:1px;height:10px;background:#e0e0e0"></div>
<div class="r" style="left:788px;top:501px;width:1px;height:10px;background:#e0e0e0"></div>
<div class="r" style="left:878px;top:501px;width:1px;height:10px;background:#e0e0e0"></div>
<div class="t " style="left:761px;top:503.38px;font-size:6.6px;line-height:8.25px;color:#555;letter-spacing:0px;font-weight:normal;transform:scaleX(0.9123);transform-origin:0 50%;">100%</div>
<div class="t " style="left:796px;top:503.38px;font-size:6.6px;line-height:8.25px;color:#555;letter-spacing:0px;font-weight:normal;transform:scaleX(0.8918);transform-origin:0 50%;">Windows (CRLF)</div>
<div class="t " style="left:884px;top:503.38px;font-size:6.6px;line-height:8.25px;color:#555;letter-spacing:0px;font-weight:normal;transform:scaleX(0.8772);transform-origin:0 50%;">UTF-8</div>
<div class="r" style="left:209px;top:164px;width:742px;height:334px;overflow:hidden">
<pre class="mono" style="position:absolute;left:8.6px;top:19.30px;margin:0;font-size:7.8px;line-height:9.37px;letter-spacing:-0.5242px;color:#202020;-webkit-text-stroke:0.12px #202020">[16.10.25 05:34:14.379] [3824] ####################[+MIMALLOC+]####################
[16.10.25 05:34:14.379] [3824] heap stats:     peak       total     current       block      total#
[16.10.25 05:34:14.379] [3824]   reserved:     1.0 GiB     1.0 GiB     1.0 GiB
[16.10.25 05:34:14.379] [3824]  committed:    32.0 MiB    32.0 MiB    32.0 MiB
[16.10.25 05:34:14.379] [3824]      reset:     0
[16.10.25 05:34:14.379] [3824]     purged:     0
[16.10.25 05:34:14.379] [3824]    touched:    64.2 KiB    64.2 KiB    64.2 KiB
[16.10.25 05:34:14.379] [3824]   segments:     1           1           1                                not all freed
[16.10.25 05:34:14.379] [3824] -abandoned:     0           0           0                                ok
[16.10.25 05:34:14.379] [3824]    -cached:     0           0           0                                ok
[16.10.25 05:34:14.379] [3824]      pages:     0           0           0                                ok
[16.10.25 05:34:14.379] [3824] -abandoned:     0           0           0                                ok
[16.10.25 05:34:14.379] [3824]  -extended:     0
[16.10.25 05:34:14.379] [3824]    -retire:     0
[16.10.25 05:34:14.379] [3824]     arenas:     1
[16.10.25 05:34:14.379] [3824]  -rollback:     0
[16.10.25 05:34:14.379] [3824]      mmaps:     1
[16.10.25 05:34:14.379] [3824]    commits:     1
[16.10.25 05:34:14.379] [3824]     resets:     0
[16.10.25 05:34:14.379] [3824]     purges:     0
[16.10.25 05:34:14.379] [3824]    guarded:     0
[16.10.25 05:34:14.379] [3824]    threads:     0           0           0                                ok
[16.10.25 05:34:14.379] [3824]   searches:     0.0 avg
[16.10.25 05:34:14.379] [3824] numa nodes:     1
[16.10.25 05:34:14.379] [3824]    elapsed:     0.028 s
[16.10.25 05:34:14.379] [3824]    process: user: 0.031 s, system: 0.046 s, faults: 6685, rss: 21.1 MiB, commit: 40.5 MiB
[16.10.25 05:34:14.379] [3824] ####################[-MIMALLOC-]####################
[16.10.25 05:34:14.380] [3824] * Detected CPU: 12th Gen Intel(R) Core(TM) i5-12400 [GenuineIntel], F6/M151/S5
[16.10.25 05:34:14.380] [3824] * CPU features: RDTSC, MMX, SSE, SSE2, SSE3, MONITOR/MWAIT, SSSE3, SSE4.1, SSE4.2, AVX, AVX2
[16.10.25 05:34:14.380] [3824] * CPU cores: [6], threads: [12]
[16.10.25 05:34:14.380] [3824] * CPU0 current freq: 2500 MHz, max freq: 2500 MHz
[16.10.25 05:34:14.380] [3824] * CPU1 current freq: 2500 MHz, max freq: 2500 MHz
[16.10.25 05:34:14.380] [3824] * CPU2 current freq: 2500 MHz, max freq: 2500 MHz
[16.10.25 05:34:14.380] [3824] * CPU3 current freq: 2500 MHz, max freq: 2500 MHz</pre>
</div>
<div class="r" style="left:0px;top:536px;width:1000px;height:1px;background:#fafafa"></div>
<div class="r" style="left:0px;top:537px;width:1000px;height:25px;background:#1f1f1f"></div>
<svg class="r" style="left:9px;top:542px;" width="15" height="15" viewBox="0 0 15 15"><path d="M5.5 1.2a4 4 0 1 0 4.6 5.2 3.3 3.3 0 0 1-4.6-5.2z" fill="#f0a830"/><path d="M2.6 13.5h9.2a2.6 2.6 0 0 0 .2-5.2 3.5 3.5 0 0 0-6.6-.6A2.9 2.9 0 0 0 2.6 13.5z" fill="#c9dff5"/><path d="M2.6 13.5h9.2a2.6 2.6 0 0 0 2.3-1.6H.5a2.9 2.9 0 0 0 2.1 1.6z" fill="#8fb8e6"/></svg>
<div class="t " style="left:26px;top:542.25px;font-size:6.8px;line-height:8.5px;color:#ffffff;letter-spacing:0px;font-weight:normal;transform:scaleX(0.8325);transform-origin:0 50%;">3°C</div>
<div class="t " style="left:26px;top:550.25px;font-size:6.8px;line-height:8.5px;color:#d8d8d8;letter-spacing:0px;font-weight:normal;transform:scaleX(0.9377);transform-origin:0 50%;">В осн. облачно</div>
<svg class="r" style="left:275px;top:542px;" width="13" height="13" viewBox="0 0 13 13"><rect x="0" y="0" width="6.1" height="6.1" fill="#3fb5f0"/><rect x="6.9" y="0" width="6.1" height="6.1" fill="#2ea8ec"/><rect x="0" y="6.9" width="6.1" height="6.1" fill="#2ea8ec"/><rect x="6.9" y="6.9" width="6.1" height="6.1" fill="#1e98e0"/></svg>
<div class="r" style="left:295px;top:541.3px;width:113px;height:16.2px;background:#f3f3f3;border-radius:8.1px"></div>
<svg class="r" style="left:300px;top:545px;" width="9" height="9" viewBox="0 0 9 9"><circle cx="3.8" cy="3.8" r="2.7" stroke="#222" stroke-width="1" fill="none"/><path d="M5.8 5.8l2.4 2.4" stroke="#222" stroke-width="1.1"/></svg>
<div class="t " style="left:313.5px;top:545.00px;font-size:7.2px;line-height:9.0px;color:#555;letter-spacing:0px;font-weight:normal;transform:scaleX(1.0275);transform-origin:0 50%;">Поиск</div>
<svg class="r" style="left:382px;top:541px;" width="24" height="15" viewBox="0 0 24 15"><path d="M2 14c3-3 6-4 9-4s7 1 11 4z" fill="#8dbb5a"/><path d="M9 13l1-7 1.5-4 2 3 2-3 1 4 1 7z" fill="#b9875a"/><circle cx="12.5" cy="7" r="0.6" fill="#222"/><circle cx="15" cy="7" r="0.6" fill="#222"/></svg>
<svg class="r" style="left:415px;top:542px;" width="13" height="13" viewBox="0 0 13 13"><rect x="3.5" y="1" width="8.5" height="8" rx="1" fill="#d0d0d0"/><rect x="0.8" y="4" width="8.5" height="8" rx="1" fill="#8a8a8a"/></svg>
<svg class="r" style="left:437px;top:542px;" width="13" height="13" viewBox="0 0 13 13"><circle cx="6.5" cy="6.5" r="6" fill="#1b9de2"/><path d="M1 7.5c0-3.5 3-6 6-6 3.5 0 5.5 2.5 5.5 4.8 0 1.5-1.3 2.4-3 2.4-1.5 0-2.5-.5-2.5-1.8 0-2.4-4.5-2.5-6 .6z" fill="#35c1f1"/><path d="M4.5 6.5c-1 3 1 5.6 4 5.6 1.5 0 2.8-.5 3.8-1.5-1 .3-4 .6-5.5-1-1-1-1.3-2.4-.8-3.5z" fill="#0c59a4"/><path d="M8 8.5c1.8.8 3.9.3 4.6-1.2" stroke="#52d45a" stroke-width="1.2" fill="none"/></svg>
<svg class="r" style="left:460px;top:542px;" width="14" height="13" viewBox="0 0 14 13"><path d="M0.5 2.5h5l1.3 1.5h6.7v8.5h-13z" fill="#f5c033"/><rect x="0.5" y="5" width="13" height="7.5" fill="#ffd65c"/><rect x="4" y="8.5" width="6" height="4" fill="#2a7de1"/></svg>
<svg class="r" style="left:484px;top:542px;" width="13" height="13" viewBox="0 0 13 13"><path d="M4 3V2a2.5 2.5 0 0 1 5 0v1" stroke="#4ca0e0" stroke-width="1" fill="none"/><rect x="0.5" y="3" width="12" height="10" rx="1.5" fill="#e8e8e8"/><rect x="3.5" y="6" width="2.5" height="2.5" fill="#f25022"/><rect x="7" y="6" width="2.5" height="2.5" fill="#7fba00"/><rect x="3.5" y="9.2" width="2.5" height="2.5" fill="#00a4ef"/><rect x="7" y="9.2" width="2.5" height="2.5" fill="#ffb900"/></svg>
<svg class="r" style="left:506px;top:542px;" width="13" height="13" viewBox="0 0 13 13"><rect x="3" y="1.5" width="9.5" height="11" rx="1.5" fill="#1c7ad8"/><rect x="0.5" y="3.5" width="7" height="7" rx="1" fill="#0f5fb3"/><circle cx="4" cy="7" r="1.8" stroke="#fff" stroke-width="0.9" fill="none"/></svg>
<svg class="r" style="left:529px;top:542px;" width="14" height="13" viewBox="0 0 14 13"><rect x="0.5" y="1" width="13" height="8.5" rx="0.8" fill="#2aa3dc"/><rect x="0.5" y="1" width="13" height="3" fill="#5ec6f0"/><rect x="5.5" y="10" width="3" height="1.5" fill="#888"/><rect x="3.5" y="11.5" width="7" height="1" fill="#aaa"/></svg>
<svg class="r" style="left:552px;top:542px;" width="13" height="13" viewBox="0 0 13 13"><circle cx="6.5" cy="6.5" r="6" fill="#e8e8e8"/><circle cx="6.5" cy="6.5" r="4.4" fill="#222"/><circle cx="6.5" cy="6.5" r="2.8" fill="#fff"/><path d="M6.5 6.5l3-3" stroke="#222" stroke-width="1.2"/></svg>
<svg class="r" style="left:575px;top:542px;" width="14" height="13" viewBox="0 0 14 13"><rect x="0.5" y="1.5" width="13" height="10" rx="1" fill="#7cc3ec"/><rect x="2" y="3" width="10" height="7" fill="#dff1fb"/><circle cx="5" cy="6" r="2" fill="#f0a43a"/><path d="M7 10l3-4 2 4z" fill="#2d7ec2"/></svg>
<svg class="r" style="left:598px;top:542px;" width="13" height="13" viewBox="0 0 13 13"><circle cx="6.5" cy="6.5" r="6.2" fill="#e8412c"/><path d="M2.8 4.5l1.3 4.5 1.3-3 1.1 3 1.1-3 1.3 3 1.3-4.5" stroke="#fff" stroke-width="1" fill="none"/></svg>
<svg class="r" style="left:621px;top:542px;" width="14" height="13" viewBox="0 0 14 13"><circle cx="10.5" cy="4" r="2" fill="#7b83eb"/><rect x="7" y="6" width="6.5" height="6" rx="2" fill="#7b83eb"/><circle cx="6.5" cy="3" r="2.3" fill="#5059c9"/><rect x="2.5" y="5.5" width="8.5" height="7" rx="2.2" fill="#5059c9"/><rect x="0.5" y="4" width="6.5" height="6.5" rx="1" fill="#4b53bc"/><path d="M2 5.8h3.5M3.75 5.8v3.6" stroke="#fff" stroke-width="0.9"/></svg>
<svg class="r" style="left:643px;top:542px;" width="14" height="13" viewBox="0 0 14 13"><rect x="0.5" y="1" width="13" height="11" rx="1" fill="#3a3a3a" stroke="#888" stroke-width="0.6"/><rect x="0.5" y="1" width="13" height="2" fill="#6a6a6a"/><path d="M2.5 5.2l2 1.7-2 1.7" stroke="#fff" stroke-width="0.8" fill="none"/><path d="M5.5 10h3.5" stroke="#fff" stroke-width="0.8"/></svg>
<svg class="r" style="left:667px;top:540px;" width="12" height="16" viewBox="0 0 12 16"><path d="M2.6 8V5a3.4 3.4 0 0 1 6.8 0v3" stroke="#6a6a6a" stroke-width="2.0" fill="none"/><path d="M2.6 8V5a3.4 3.4 0 0 1 6.8 0v3" stroke="#111" stroke-width="1.2" fill="none"/><rect x="1" y="8" width="4" height="6.5" fill="#f2e21b" stroke="#222" stroke-width="0.5"/><rect x="7" y="8" width="4" height="6.5" fill="#f2e21b" stroke="#222" stroke-width="0.5"/></svg>
<svg class="r" style="left:689px;top:540px;" width="15" height="16" viewBox="0 0 15 16"><circle cx="6.5" cy="9" r="6.2" fill="#5865f2"/><ellipse cx="4.7" cy="9.3" rx="1" ry="1.1" fill="#fff"/><ellipse cx="8.3" cy="9.3" rx="1" ry="1.1" fill="#fff"/><circle cx="11.3" cy="4.2" r="3.7" fill="#e0524d"/><text x="11.3" y="6" font-size="4.6" fill="#fff" text-anchor="middle" font-family="Liberation Sans" font-weight="bold">9+</text></svg>
<svg class="r" style="left:713px;top:541px;" width="13" height="15" viewBox="0 0 13 15"><rect x="1" y="0.8" width="11" height="13.4" rx="1" fill="#3aa6d8"/><path d="M3 4h7M3 6.5h7M3 9h7" stroke="#1a6f99" stroke-width="0.7"/><rect x="1" y="12.8" width="11" height="1.8" fill="#d9782e"/></svg>
<div class="r" style="left:442.25px;top:557.5px;width:3px;height:1px;background:#9a9a9a;border-radius:1px"></div>
<div class="r" style="left:465.5px;top:557.5px;width:3px;height:1px;background:#9a9a9a;border-radius:1px"></div>
<div class="r" style="left:648.5px;top:557.5px;width:3px;height:1px;background:#9a9a9a;border-radius:1px"></div>
<div class="r" style="left:671.75px;top:557.5px;width:3px;height:1px;background:#9a9a9a;border-radius:1px"></div>
<div class="r" style="left:694.75px;top:557.5px;width:3px;height:1px;background:#9a9a9a;border-radius:1px"></div>
<div class="r" style="left:718.0px;top:557.5px;width:3px;height:1px;background:#9a9a9a;border-radius:1px"></div>
<svg class="r" style="left:892px;top:546px;" width="8" height="5" viewBox="0 0 8 5"><path d="M0.8 4.2L4 1l3.2 3.2" stroke="#fff" stroke-width="0.9" fill="none"/></svg>
<div class="t " style="left:910px;top:546.25px;font-size:6.8px;line-height:8.5px;color:#f2f2f2;letter-spacing:0px;font-weight:normal;transform:scaleX(0.8813);transform-origin:0 50%;">РУС</div>
<svg class="r" style="left:930px;top:543px;" width="11" height="12" viewBox="0 0 11 12"><rect x="0.6" y="1.6" width="8.5" height="6.6" rx="0.5" stroke="#eee" stroke-width="0.9" fill="none"/><path d="M3 10.5h4" stroke="#eee" stroke-width="0.9"/><rect x="6.5" y="0.5" width="4" height="5" fill="#1f1f1f"/><path d="M7.5 1.5h2v3h-2z" stroke="#eee" stroke-width="0.7" fill="none"/></svg>
<svg class="r" style="left:943px;top:544px;" width="11" height="10" viewBox="0 0 11 10"><path d="M1 3.5h2l3-2.5v8l-3-2.5H1z" stroke="#eee" stroke-width="0.8" fill="none"/><path d="M7.5 3.2c.7.9.7 2.7 0 3.6M9 2c1.3 1.7 1.3 4.3 0 6" stroke="#eee" stroke-width="0.8" fill="none"/></svg>
<div class="t " style="left:978.75px;top:541.25px;font-size:6.8px;line-height:8.5px;color:#ffffff;letter-spacing:0px;font-weight:normal;transform:scaleX(0.8501);transform-origin:0 50%;">5:35</div>
<div class="t " style="left:960.5px;top:549.75px;font-size:6.8px;line-height:8.5px;color:#ffffff;letter-spacing:0px;font-weight:normal;transform:scaleX(0.8595);transform-origin:0 50%;">16.10.2025</div>
</body></html>
